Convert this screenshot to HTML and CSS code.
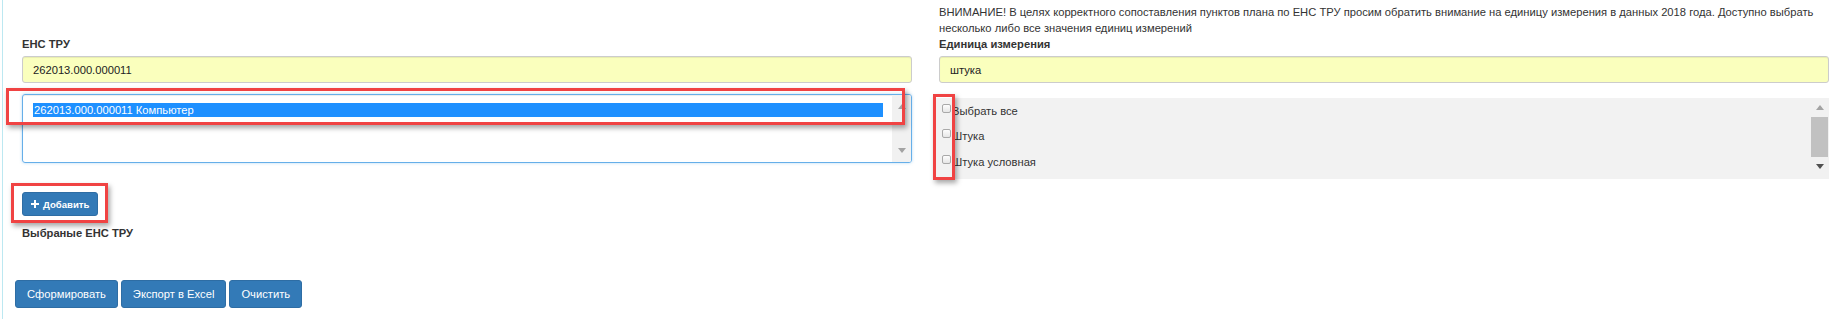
FILE: index.html
```html
<!DOCTYPE html>
<html lang="ru">
<head>
<meta charset="utf-8">
<title>ЕНС ТРУ</title>
<link rel="stylesheet" href="styles.css">
</head>
<body>
<div class="page">
  <div class="form">
    <div class="warn">ВНИМАНИЕ! В целях корректного сопоставления пунктов плана по ЕНС ТРУ просим обратить внимание на единицу измерения в данных 2018 года. Доступно выбрать<br>несколько либо все значения единиц измерений</div>

    <label class="lbl l1">ЕНС ТРУ</label>
    <label class="lbl l2">Единица измерения</label>

    <div class="inp i1">262013.000.000011</div>
    <div class="inp i2">штука</div>

    <div class="leftlow">
      <div class="listbox">
        <div class="opts">
          <div class="opt sel">262013.000.000011 Компьютер</div>
        </div>
        <div class="sb">
          <span class="arr up light"></span>
          <span class="arr down light"></span>
        </div>
      </div>
      <div class="addarea">
        <button class="btn btn-sm"><svg class="plus" viewBox="0 0 8 8" width="8" height="8"><path d="M3 0h2v3h3v2H5v3H3V5H0V3h3z" fill="#fff"/></svg>Добавить</button>
        <label class="lbl sel-lbl">Выбраные ЕНС ТРУ</label>
      </div>
    </div>

    <div class="chkpanel">
      <div class="items">
        <div class="item"><span class="cb"></span>Выбрать все</div>
        <div class="item"><span class="cb"></span>Штука</div>
        <div class="item"><span class="cb"></span>Штука условная</div>
      </div>
      <div class="sb sb2">
        <span class="arr up light"></span>
        <span class="thumb"></span>
        <span class="arr down dark"></span>
      </div>
    </div>
  </div>

  <div class="actions">
    <button class="btn">Сформировать</button>
    <button class="btn">Экспорт в Excel</button>
    <button class="btn">Очистить</button>
  </div>

  <div class="mark m1"></div>
  <div class="mark m2"></div>
  <div class="mark m3"></div>
</div>
</body>
</html>
```

FILE: styles.css
```css
* { box-sizing: border-box; }
html, body { margin: 0; padding: 0; background: #fff; }
body {
  font-family: "Liberation Sans", Arial, sans-serif;
  font-size: 11.2px;
  line-height: 16px;
  color: #333;
}
.page {
  position: relative;
  margin-left: 2px;
  border-left: 1px solid #bce8f1;
  min-height: 319px;
  padding-left: 12px;
}
.form {
  display: grid;
  grid-template-columns: 890px 890px;
  column-gap: 27px;
  padding-left: 7px;
  align-items: start;
  grid-template-areas:
    ". warn"
    "l1 l2"
    "i1 i2"
    "low chk";
}
.warn { grid-area: warn; padding-top: 4px; }
.lbl { display: block; font-weight: bold; margin-bottom: 4px; color: #333; }
.l1 { grid-area: l1; }
.l2 { grid-area: l2; }
.inp {
  height: 27px;
  border: 1px solid #ccc;
  border-radius: 3px;
  background: #faffbd;
  padding: 0 10px;
  display: flex;
  align-items: center;
  color: #222;
  box-shadow: inset 0 1px 1px rgba(0,0,0,.075);
}
.i1 { grid-area: i1; }
.i2 { grid-area: i2; }

.leftlow { grid-area: low; }
.listbox {
  margin-top: 11px;
  height: 69px;
  border: 1px solid #66afe9;
  border-radius: 3px;
  display: flex;
  box-shadow: inset 0 1px 1px rgba(0,0,0,.075), 0 0 3px rgba(102,175,233,.5);
  overflow: hidden;
}
.opts { flex: 1; padding: 8px 9px 0 10px; }
.opt { height: 14px; line-height: 14px; color: #000; padding-left: 1px; }
.opt.sel { background: #1e90ff; color: #fff; }

.sb {
  width: 19px;
  background: #f1f1f1;
  display: flex;
  flex-direction: column;
  align-items: center;
  justify-content: space-between;
  padding: 9px 0 9px;
}
.arr { width: 0; height: 0; border-left: 4px solid transparent; border-right: 4px solid transparent; }
.arr.up { border-bottom: 5px solid #a3a3a3; }
.arr.down.light { border-top: 5px solid #a3a3a3; }
.arr.down.dark { border-top: 5px solid #505050; }

.chkpanel {
  grid-area: chk;
  margin-top: 15px;
  height: 81px;
  background: #f2f2f2;
  display: flex;
  margin-left: -4px;
}
.items { flex: 1; padding: 0 0 0 7px; }
.item { height: 25.5px; display: flex; align-items: center; color: #333; }
.cb {
  width: 9px; height: 9px;
  border: 1px solid #a9a9a9;
  border-radius: 2px;
  background: linear-gradient(#fdfdfd, #e6e6e6);
  margin-right: 1px;
  margin-top: -5px;
}
.sb2 { padding: 7px 0 0; justify-content: flex-start; }
.sb2 .thumb { width: 17px; height: 40px; background: #c1c1c1; margin: 7px 0 7px; }

.addarea { padding-top: 29px; }
.btn {
  font-family: "Liberation Sans", Arial, sans-serif;
  display: inline-flex;
  align-items: center;
  height: 28px;
  padding: 0 11px;
  font-size: 11.2px;
  color: #fff;
  background: #337ab7;
  border: 1px solid #2e6da4;
  border-radius: 3px;
  margin: 0;
  cursor: pointer;
}
.btn-sm { height: 24px; font-size: 9.6px; font-weight: bold; padding: 0 8px 0 8px; }
.plus { margin-right: 4px; }
.sel-lbl { margin-top: 9px; }

.actions { margin-top: 35px; display: flex; gap: 3px; }

.mark {
  position: absolute;
  border: 3px solid #f04343;
  box-shadow: 2px 3px 5px rgba(0,0,0,.35);
}
.m1 { left: 3px; top: 88px; width: 899px; height: 37px; }
.m2 { left: 930px; top: 94px; width: 22px; height: 86px; }
.m3 { left: 8px; top: 183px; width: 97px; height: 40px; }
```
